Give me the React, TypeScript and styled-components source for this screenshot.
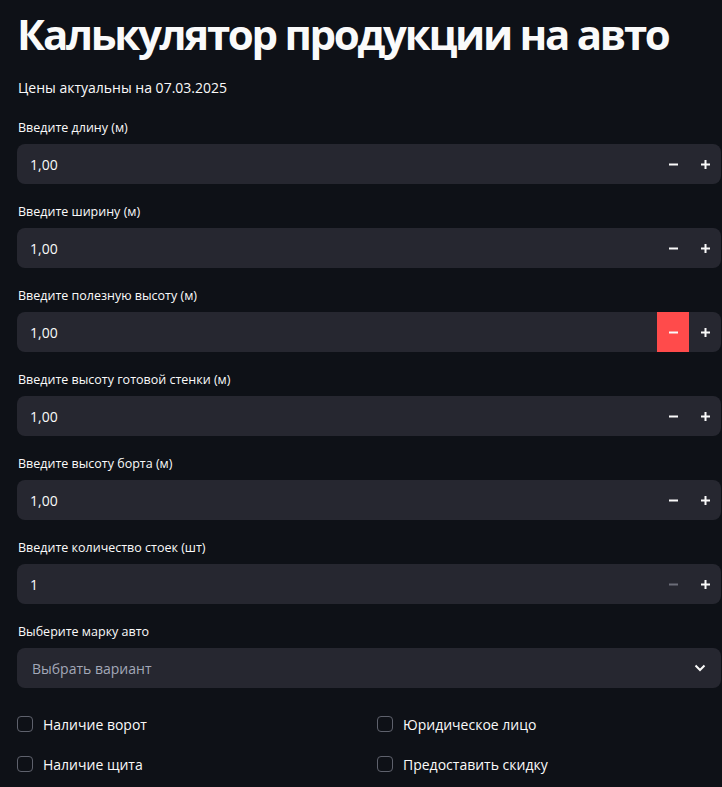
import React from "react";
import styled, { createGlobalStyle } from "styled-components";

const Global = createGlobalStyle`
  html, body { margin: 0; padding: 0; background: #0e1117; }
  body { font-family: "Open Sans", "Noto Sans", sans-serif; color: #fafafa; overflow: hidden; }
  * { box-sizing: border-box; }
`;

const Page = styled.div`
  width: 722px;
  height: 787px;
  background: #0e1117;
  padding: 0 1px 0 17px;
  overflow: hidden;
`;

const Title = styled.h1`
  margin: 0;
  padding-top: 6px;
  font-size: 42px;
  line-height: 56px;
  font-weight: 700;
  letter-spacing: -2.3px;
  white-space: nowrap;
  color: #fafafa;
`;

const Note = styled.p`
  margin: 16px 0 0 1px;
  font-size: 14px;
  line-height: 20px;
  color: #fafafa;
`;

const Field = styled.div`
  margin-top: 21px;
  display: flex;
  flex-direction: column;
  & + & { margin-top: 19px; }
`;

const Label = styled.label`
  font-size: 12.5px;
  line-height: 18px;
  height: 18px;
  margin: 0 0 7px 1px;
  color: #fafafa;
`;

const InputBox = styled.div`
  height: 40px;
  background: #262730;
  border-radius: 8px;
  display: flex;
  align-items: stretch;
  overflow: hidden;
`;

const Value = styled.div<{ $placeholder?: boolean }>`
  flex: 1;
  display: flex;
  align-items: center;
  padding-left: ${(p) => (p.$placeholder ? "15px" : "13px")};
  font-size: 14px;
  color: ${(p) => (p.$placeholder ? "#a3a8b8" : "#fafafa")};
`;

const StepButton = styled.div<{ $active?: boolean }>`
  width: 32px;
  display: flex;
  align-items: center;
  justify-content: center;
  background: ${(p) => (p.$active ? "#ff4b4b" : "transparent")};
`;

const Chevron = styled.div`
  width: 40px;
  display: flex;
  align-items: center;
  justify-content: center;
  padding-right: 2px;
`;

const Checks = styled.div`
  margin-top: 24px;
  display: grid;
  grid-template-columns: 1fr 1fr;
  column-gap: 16px;
  row-gap: 16px;
`;

const CheckRow = styled.div`
  display: flex;
  align-items: center;
  height: 24px;
`;

const Box = styled.span`
  width: 16px;
  height: 16px;
  border: 1px solid #5e616c;
  border-radius: 4px;
  margin-right: 10px;
`;

const CheckText = styled.span`
  font-size: 14px;
  color: #fafafa;
`;

const Minus = ({ color }: { color: string }) => (
  <svg width="9" height="9" viewBox="0 0 9 9">
    <rect x="0" y="3.5" width="9" height="2" fill={color} />
  </svg>
);
const Plus = () => (
  <svg width="9" height="9" viewBox="0 0 9 9">
    <rect x="0" y="3.5" width="9" height="2" fill="#fafafa" />
    <rect x="3.5" y="0" width="2" height="9" fill="#fafafa" />
  </svg>
);

const fields: { label: string; value: string; active?: boolean; disabled?: boolean }[] = [
  { label: "Введите длину (м)", value: "1,00" },
  { label: "Введите ширину (м)", value: "1,00" },
  { label: "Введите полезную высоту (м)", value: "1,00", active: true },
  { label: "Введите высоту готовой стенки (м)", value: "1,00" },
  { label: "Введите высоту борта (м)", value: "1,00" },
  { label: "Введите количество стоек (шт)", value: "1", disabled: true },
];

export default function App() {
  return (
    <Page>
      <Global />
      <Title>Калькулятор продукции на авто</Title>
      <Note>Цены актуальны на 07.03.2025</Note>
      {fields.map((f) => (
        <Field key={f.label}>
          <Label>{f.label}</Label>
          <InputBox>
            <Value>{f.value}</Value>
            <StepButton $active={f.active}>
              <Minus color={f.disabled ? "#6b6d78" : "#fafafa"} />
            </StepButton>
            <StepButton>
              <Plus />
            </StepButton>
          </InputBox>
        </Field>
      ))}
      <Field>
        <Label>Выберите марку авто</Label>
        <InputBox>
          <Value $placeholder>Выбрать вариант</Value>
          <Chevron>
            <svg width="12" height="8" viewBox="0 0 12 8">
              <path d="M1.5 1.5 L6 6 L10.5 1.5" stroke="#fafafa" strokeWidth="2" fill="none" />
            </svg>
          </Chevron>
        </InputBox>
      </Field>
      <Checks>
        <CheckRow><Box /><CheckText>Наличие ворот</CheckText></CheckRow>
        <CheckRow><Box /><CheckText>Юридическое лицо</CheckText></CheckRow>
        <CheckRow><Box /><CheckText>Наличие щита</CheckText></CheckRow>
        <CheckRow><Box /><CheckText>Предоставить скидку</CheckText></CheckRow>
      </Checks>
    </Page>
  );
}
